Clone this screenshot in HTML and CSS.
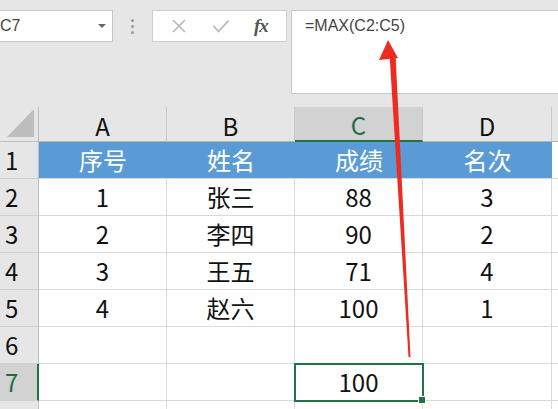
FILE: index.html
```html
<!DOCTYPE html>
<html lang="zh">
<head>
<meta charset="utf-8">
<title>MAX</title>
<link rel="stylesheet" href="styles.css">
</head>
<body>
<div class="app">
  <div class="toolbar">
    <div class="namebox">
      <span class="name">C7</span>
      <span class="caret"></span>
    </div>
    <div class="splitter"><span></span><span></span><span></span></div>
    <div class="fxbox">
      <svg class="icon" width="16" height="14" viewBox="0 0 16 14"><path d="M2 1 L14 13 M14 1 L2 13" stroke="#b8b8b8" stroke-width="1.6" fill="none"/></svg>
      <svg class="icon" width="18" height="14" viewBox="0 0 18 14"><path d="M1.5 7 L6.5 12.5 L16.5 1.5" stroke="#b8b8b8" stroke-width="1.8" fill="none"/></svg>
      <span class="fx">fx</span>
    </div>
    <div class="formula">=MAX(C2:C5)</div>
  </div>

  <div class="sheet">
    <div class="corner"><span class="tri"></span></div>
    <div class="colh">A</div>
    <div class="colh">B</div>
    <div class="colh sel">C</div>
    <div class="colh">D</div>
    <div class="colh last"></div>

    <div class="rowh">1</div>
    <div class="cell head">序号</div>
    <div class="cell head">姓名</div>
    <div class="cell head">成绩</div>
    <div class="cell head">名次</div>
    <div class="cell last"></div>

    <div class="rowh">2</div>
    <div class="cell">1</div>
    <div class="cell">张三</div>
    <div class="cell">88</div>
    <div class="cell">3</div>
    <div class="cell last"></div>

    <div class="rowh">3</div>
    <div class="cell">2</div>
    <div class="cell">李四</div>
    <div class="cell">90</div>
    <div class="cell">2</div>
    <div class="cell last"></div>

    <div class="rowh">4</div>
    <div class="cell">3</div>
    <div class="cell">王五</div>
    <div class="cell">71</div>
    <div class="cell">4</div>
    <div class="cell last"></div>

    <div class="rowh">5</div>
    <div class="cell">4</div>
    <div class="cell">赵六</div>
    <div class="cell">100</div>
    <div class="cell">1</div>
    <div class="cell last"></div>

    <div class="rowh">6</div>
    <div class="cell"></div>
    <div class="cell"></div>
    <div class="cell"></div>
    <div class="cell"></div>
    <div class="cell last"></div>

    <div class="rowh sel">7</div>
    <div class="cell"></div>
    <div class="cell"></div>
    <div class="cell active">100</div>
    <div class="cell"></div>
    <div class="cell last"></div>

    <div class="rowh"></div>
    <div class="cell"></div>
    <div class="cell"></div>
    <div class="cell"></div>
    <div class="cell"></div>
    <div class="cell last"></div>
  </div>

  <svg class="arrow" width="558" height="409" viewBox="0 0 558 409">
    <polygon points="389.5,54 395.5,54 410.5,357 408.5,357" fill="#ee2b20"/>
    <polygon points="388,40 379,60 398,58" fill="#ee2b20"/>
  </svg>
</div>
</body>
</html>
```

FILE: styles.css
```css
html, body {
  margin: 0;
  padding: 0;
  width: 558px;
  height: 409px;
  overflow: hidden;
  background: #ffffff;
}

.app {
  position: relative;
  width: 558px;
  height: 409px;
  overflow: hidden;
  font-family: "Noto Sans CJK SC", "Noto Sans", sans-serif;
}

.toolbar {
  display: flex;
  align-items: flex-start;
  height: 107px;
  box-sizing: border-box;
  padding-top: 10px;
  background: #e6e6e6;
}

.namebox {
  display: flex;
  align-items: center;
  justify-content: space-between;
  width: 113px;
  height: 32px;
  box-sizing: border-box;
  background: #fff;
  border: 1px solid #c6c6c6;
  border-left: none;
  padding-right: 6px;
}

.name {
  margin-left: 0;
  font-family: "Liberation Sans", sans-serif;
  font-size: 16px;
  color: #444;
}

.caret {
  width: 0;
  height: 0;
  border-left: 4px solid transparent;
  border-right: 4px solid transparent;
  border-top: 4px solid #666;
}

.splitter {
  display: flex;
  flex-direction: column;
  align-items: center;
  gap: 3px;
  width: 39px;
  padding-top: 9px;
}

.splitter span {
  width: 3px;
  height: 3px;
  border-radius: 50%;
  background: #9a9a9a;
}

.fxbox {
  display: flex;
  align-items: center;
  justify-content: space-around;
  width: 135px;
  height: 32px;
  box-sizing: border-box;
  background: #fff;
  border: 1px solid #cfcfcf;
  padding: 0 6px 0 6px;
}

.fx {
  font-family: "Liberation Serif", serif;
  font-style: italic;
  font-weight: bold;
  font-size: 19px;
  color: #555;
  letter-spacing: -1px;
}

.formula {
  flex: 1;
  margin-left: 4px;
  height: 84px;
  box-sizing: border-box;
  background: #fff;
  border: 1px solid #c6c6c6;
  border-right: none;
  padding: 6px 0 0 13px;
  font-family: "Liberation Sans", sans-serif;
  font-size: 16px;
  color: #444;
}

.sheet {
  display: grid;
  grid-template-columns: 39px 128px 128px 128px 129px 1fr;
  grid-template-rows: 35px repeat(8, 37px);
}

.sheet > div {
  box-sizing: border-box;
  display: flex;
  align-items: center;
  justify-content: center;
  font-size: 24px;
  color: #111;
  line-height: 1;
}

.corner {
  background: #e6e6e6;
  border-right: 1px solid #bfbfbf;
  border-bottom: 1px solid #bfbfbf;
  position: relative;
}

.tri {
  position: absolute;
  right: 4px;
  bottom: 4px;
  width: 0;
  height: 0;
  border-left: 27px solid transparent;
  border-bottom: 28px solid #bdbdbd;
}

.colh {
  background: #e6e6e6;
  border-right: 1px solid #cacaca;
  border-bottom: 1px solid #b5b5b5;
  padding-top: 3px;
}

.colh.sel {
  background: #d2d2d2;
  border-bottom: 2px solid #217346;
  color: #1d6b41;
}

.colh.last {
  border-right: none;
}

.rowh {
  background: #e6e6e6;
  border-right: 1px solid #bfbfbf;
  border-bottom: 1px solid #d0d0d0;
  justify-content: flex-start !important;
  padding-left: 5px;
}

.rowh.sel {
  background: #d2d2d2;
  border-right: 2px solid #217346;
  color: #1d6b41;
}

.cell {
  background: #fff;
  border-right: 1px solid #d9d9d9;
  border-bottom: 1px solid #d9d9d9;
}

.cell.head {
  background: #5b9bd5;
  color: #ffffff;
  border-right: none;
  border-bottom: 1px solid #d9d9d9;
}

.cell.last {
  border-right: none;
}

.cell.active {
  position: relative;
  outline: 2px solid #217346;
  outline-offset: -1px;
}

.cell.active::after {
  content: "";
  position: absolute;
  right: -4px;
  bottom: -4px;
  width: 6px;
  height: 6px;
  background: #217346;
  border: 1px solid #fff;
}

.arrow {
  position: absolute;
  left: 0;
  top: 0;
  pointer-events: none;
}
```
